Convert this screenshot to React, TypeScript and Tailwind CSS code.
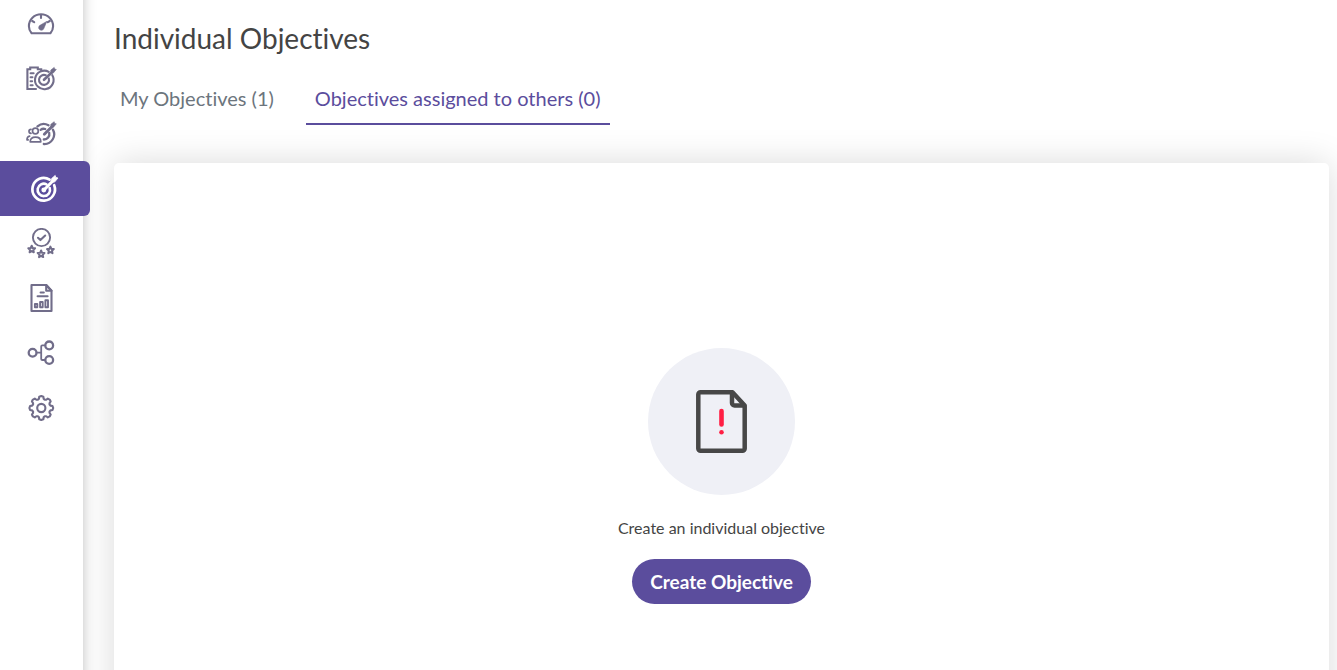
import React from 'react';

type IconProps = { children: React.ReactNode };

const Icon: React.FC<IconProps> = ({ children }) => (
  <svg
    className="h-[31px] w-[31px] shrink-0"
    viewBox="0 0 31 31"
    fill="none"
    stroke="currentColor"
    strokeWidth="2.1"
    strokeLinecap="round"
    strokeLinejoin="round"
    aria-hidden="true"
  >
    {children}
  </svg>
);

const DashboardIcon = () => (
  <Icon>
    <path d="M5.6 25.3h18.8c1.7-2 2.7-4.5 2.7-7.1C27.1 11.5 21.7 6.3 15 6.3S2.9 11.5 2.9 18.2c0 2.6 1 5.1 2.7 7.1Z" />
    <path d="M15 7v3M6.2 13l2 1.2M23.8 13l-2 1.2" />
    <path d="M20.8 13.600l-2.800 6.400a2.700 2.700 0 1 1-3.600-3Z" fill="currentColor" strokeWidth="0.6" />
  </Icon>
);

const PlanIcon = () => (
  <Icon>
    <path d="M10 26H1.4V6.200h2.800V4.500h7.600v1.700h3.400v1.600" strokeLinejoin="miter" />
    <path d="M4.600 10.300h3M4.600 14.300h1.800M4.600 18.300h1.500M4.600 22.300h2" />
    <path d="M22.800 8.800A9.300 9.300 0 1 0 26.300 12.200" />
    <path d="M19.800 12.200A5 5 0 1 0 22.800 15.400" />
    <path d="M18 16.800l8-7.600" strokeWidth="2.600" />
    <path d="M24.800 9.800V7l3.400-2.600.4 1.700 1.700.3-2.800 3.400Z" fill="currentColor" strokeWidth="0.6" />
  </Icon>
);

const TeamIcon = () => (
  <Icon>
    <path d="M11.500 8.400A9.700 9.700 0 0 1 22.500 7.300M26.900 11.600A9.700 9.700 0 0 1 17.800 26" strokeWidth="2.300" />
    <path d="M14.600 11.800a5.200 5.200 0 0 1 4.600-.8M23.200 14.800a5.400 5.400 0 0 1-5.400 6.700" strokeWidth="2.300" />
    <path d="M18.300 16.300l8-8" strokeWidth="2.800" />
    <path d="M24.800 9.200V6.300l3.400-2.600.4 1.800 1.700.3-2.800 3.400Z" fill="currentColor" strokeWidth="0.6" />
    <circle cx="9.400" cy="13" r="2.900" strokeWidth="1.700" />
    <path d="M5 11.300a2 2 0 1 0 0 4" strokeWidth="1.700" />
    <path d="M4.200 23.800h10.600c0-3-1.600-4.600-5.300-4.600S4.200 20.800 4.200 23.800Z" strokeWidth="1.700" />
    <path d="M3.600 18.200C1.800 18.500 1 19.900 1 21.800h1.200" strokeWidth="1.700" />
  </Icon>
);

const TargetIcon = () => (
  <Icon>
    <path d="M20.600 6.700A11.300 11.300 0 1 0 25.200 12.200" strokeWidth="2.700" />
    <path d="M17.500 11.300A6.200 6.200 0 1 0 20.700 15" strokeWidth="2.600" />
    <circle cx="14.800" cy="17" r="1.400" fill="currentColor" />
    <path d="M15 17l9-9.200" strokeWidth="3" />
    <path d="M22.600 8.800V5.600l3.600-3.200.6 2 2.200.6-3.200 3.800Z" fill="currentColor" strokeWidth="0.8" />
  </Icon>
);

const STAR = 'M0-3.500L1-1.200 3.400-1 1.600.7 2.100 3.100 0 1.900-2.100 3.100-1.600.7-3.400-1-1-1.200Z';

const ReviewIcon = () => (
  <Icon>
    <circle cx="15.500" cy="9.500" r="8.600" strokeWidth="1.900" />
    <path d="M12 9.800l2.400 2.300 4.800-4.600" />
    <g strokeWidth="2">
      <path d={STAR} transform="translate(5.700 21.200)" />
      <path d={STAR} transform="translate(15.100 26)" />
      <path d={STAR} transform="translate(24.400 22.100)" />
    </g>
  </Icon>
);

const ReportIcon = () => (
  <Icon>
    <path d="M20.200 2H5.500v26h20V7.800Z" />
    <path d="M20.200 2v5.800h5.300Z" />
    <path d="M14.600 9.500h3.200M11.600 13.200h10" />
    <path d="M8.900 21h2.400v3.200H8.900ZM14.100 19h2.600v5.200h-2.600ZM19.400 17.200h2.600v7h-2.600Z" strokeWidth="1.900" />
  </Icon>
);

const FlowIcon = () => (
  <Icon>
    <g strokeWidth="2.300">
      <circle cx="6.600" cy="14.700" r="3.900" />
      <circle cx="23.200" cy="7.400" r="3.900" />
      <circle cx="23.200" cy="22" r="3.900" />
    </g>
    <path d="M10.600 14.700h4.600M19.300 7.400h-3q-1.100 0-1.100 1.100v12.400q0 1.100 1.100 1.100h3" strokeWidth="1.800" />
  </Icon>
);

// Eight rounded teeth around the hub
const gearPoints = Array.from({ length: 8 }, (_, i) => (i * Math.PI) / 4)
  .flatMap((a) => [
    [9, a - 0.36],
    [9.6, a - 0.25],
    [11.4, a - 0.18],
    [11.9, a],
    [11.4, a + 0.18],
    [9.6, a + 0.25],
    [9, a + 0.36],
  ])
  .map(([r, a]) => `${(15.3 + r * Math.cos(a)).toFixed(2)},${(15 + r * Math.sin(a)).toFixed(2)}`)
  .join(' ');

const SettingsIcon = () => (
  <Icon>
    <polygon points={gearPoints} />
    <circle cx="15.300" cy="15" r="4.100" />
  </Icon>
);

const navItems = [
  { name: 'Dashboard', icon: DashboardIcon },
  { name: 'Objective Plans', icon: PlanIcon },
  { name: 'Team Objectives', icon: TeamIcon },
  { name: 'Individual Objectives', icon: TargetIcon, active: true },
  { name: 'Reviews', icon: ReviewIcon },
  { name: 'Reports', icon: ReportIcon },
  { name: 'Organization', icon: FlowIcon },
  { name: 'Settings', icon: SettingsIcon },
];

const Sidebar: React.FC = () => (
  <nav className="relative z-10 -my-4 w-[83px] shrink-0 bg-white pt-3 shadow-[0_0_12px_rgba(0,0,0,0.25)]">
    <ul>
      {navItems.map(({ name, icon: NavIcon, active }) => (
        <li key={name}>
          <a
            href="#"
            aria-label={name}
            aria-current={active ? 'page' : undefined}
            className={
              active
                ? 'flex h-[55px] w-[90px] items-center rounded-r-md bg-[#5b4d9d] pl-[29px] text-white'
                : 'flex h-[55px] items-center pl-[26px] text-[#716d8a]'
            }
          >
            <NavIcon />
          </a>
        </li>
      ))}
    </ul>
  </nav>
);

const EmptyState: React.FC = () => (
  <section className="flex shrink-0 flex-col items-center rounded-[5px] bg-white py-[185px] shadow-[0_0_35px_rgba(0,0,0,0.15)]">
    <div className="flex h-[147px] w-[147px] shrink-0 items-center justify-center rounded-full bg-[#eff0f6]">
      <svg className="h-[63px] w-[51px]" viewBox="0 0 51 63" fill="none" aria-hidden="true">
        <path
          d="M36.500 2.300H4.500a2.200 2.200 0 0 0-2.200 2.200v54a2.200 2.200 0 0 0 2.200 2.200h42a2.200 2.200 0 0 0 2.200-2.200V15.500Z"
          stroke="#474747"
          strokeWidth="4.500"
          strokeLinejoin="round"
        />
        <path
          d="M36 3v10a2.500 2.500 0 0 0 2.500 2.500H48"
          stroke="#474747"
          strokeWidth="4.500"
        />
        <path d="M25.500 21v13.500" stroke="#ff1f44" strokeWidth="4.600" strokeLinecap="round" />
        <circle cx="25.500" cy="42.300" r="2.300" fill="#ff1f44" />
      </svg>
    </div>
    <p className="mt-[21px] text-base leading-6 text-[#444]">Create an individual objective</p>
    <button
      type="button"
      className="mt-[19px] h-[45px] shrink-0 rounded-full bg-[#5b4d9d] px-[18px] pt-0.5 text-[19px] font-bold text-white"
    >
      Create Objective
    </button>
  </section>
);

const App: React.FC = () => {
  return (
    <div className="flex h-screen overflow-hidden bg-white font-[Lato,sans-serif] [font-variant-ligatures:none]">
      <Sidebar />
      <main className="flex flex-1 flex-col overflow-hidden pt-5 pr-2 pl-[31px]">
        <h1 className="text-[28px] leading-9 text-[#444]">Individual Objectives</h1>
        <div role="tablist" className="mt-4 mb-[38px] flex gap-[26px] text-xl">
          <button type="button" role="tab" aria-selected="false" className="h-[53px] px-1.5 pb-0.5 text-[#6c757d]">
            My Objectives (1)
          </button>
          <button
            type="button"
            role="tab"
            aria-selected="true"
            className="h-[53px] border-b-2 border-[#5b4d9d] px-[9px] text-[#5b4d9d]"
          >
            Objectives assigned to others (0)
          </button>
        </div>
        <EmptyState />
      </main>
    </div>
  );
};

export default App;
